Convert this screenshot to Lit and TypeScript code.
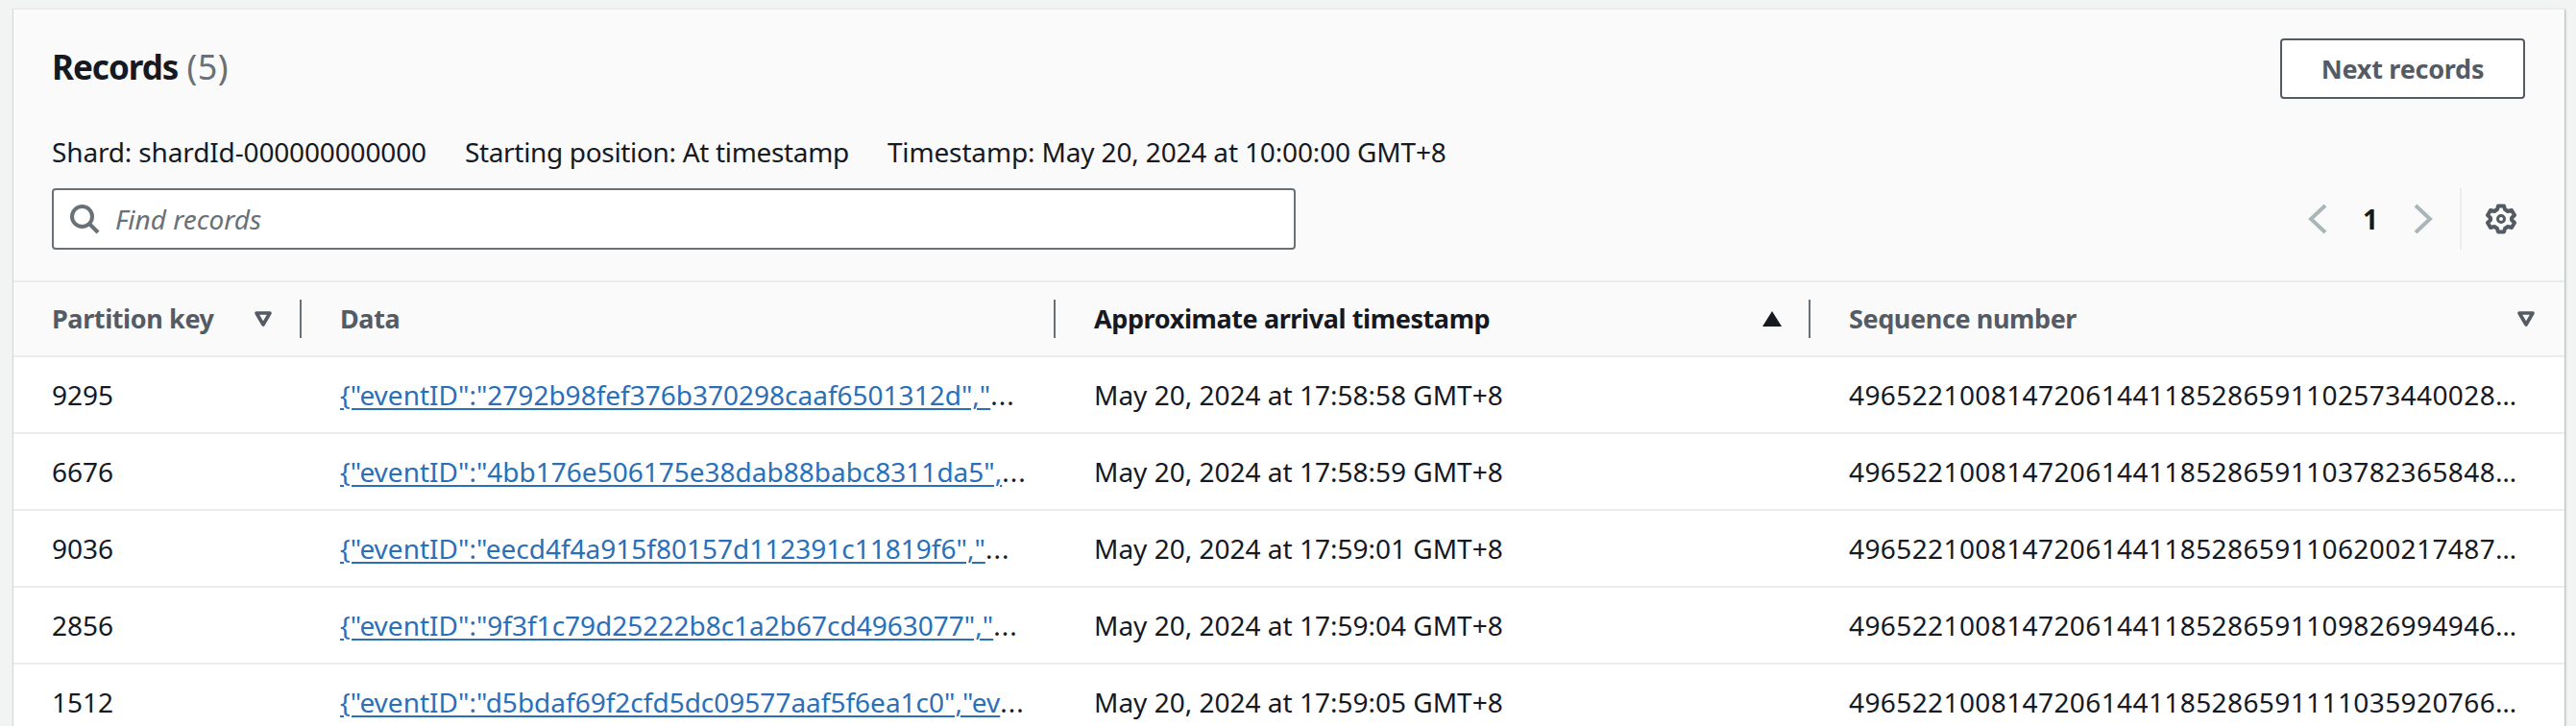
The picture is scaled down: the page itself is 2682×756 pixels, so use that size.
import { LitElement, html, css, svg } from "lit";
import { customElement } from "lit/decorators.js";

const rows = [
  ["9295", '{"eventID":"2792b98fef376b370298caaf6501312d","', "May 20, 2024 at 17:58:58 GMT+8", "49652210081472061441185286591102573440028123456"],
  ["6676", '{"eventID":"4bb176e506175e38dab88babc8311da5",', "May 20, 2024 at 17:58:59 GMT+8", "49652210081472061441185286591103782365848123456"],
  ["9036", '{"eventID":"eecd4f4a915f80157d112391c11819f6","', "May 20, 2024 at 17:59:01 GMT+8", "49652210081472061441185286591106200217487123456"],
  ["2856", '{"eventID":"9f3f1c79d25222b8c1a2b67cd4963077","', "May 20, 2024 at 17:59:04 GMT+8", "49652210081472061441185286591109826994946123456"],
  ["1512", '{"eventID":"d5bdaf69f2cfd5dc09577aaf5f6ea1c0","ev', "May 20, 2024 at 17:59:05 GMT+8", "49652210081472061441185286591111035920766123456"],
];

const sortDown = svg`<path d="M3 4h14L10 16z" fill="none" stroke="currentColor" stroke-width="3.6" stroke-linejoin="round"/>`;

@customElement("app-root")
export class AppRoot extends LitElement {
  static styles = css`
    :host { display: block; height: 756px; overflow: hidden; background: #f2f3f3; color: #16191f;
      font-family: "Noto Sans", sans-serif; font-size: 28px; line-height: 36px; }
    .panel { margin: 9px 12px 0 14px; background: #fff; box-shadow: 1px 1px 2px rgba(0,28,36,.3), -1px 0 1px rgba(0,28,36,.1); border-top: 1px solid #eaeded; }
    .head { background: #fafafa; padding: 30px 41px 32px 40px; border-bottom: 2px solid #eaeded; }
    .top { display: flex; justify-content: space-between; align-items: center; }
    h2 { margin: 0 0 3px; font-size: 35px; line-height: 48px; font-weight: 700; letter-spacing: -1px; }
    h2 span { font-weight: 400; font-size: 36px; letter-spacing: 0.4px; margin-left: 1px; color: #687078; }
    .btn { width: 255px; height: 63px; box-sizing: border-box; display: flex; align-items: center; justify-content: center;
      border: 2px solid #545b64; border-radius: 4px; background: #fff; color: #545b64; font-weight: 700; font-size: 27px; letter-spacing: -0.25px; }
    .meta { display: flex; gap: 40px; margin-top: 37px; letter-spacing: -0.15px; }
    .meta .tight { letter-spacing: -0.33px; }
    .tools { display: flex; justify-content: space-between; align-items: center; margin-top: 20px; height: 64px; }
    .search { width: 1295px; height: 64px; box-sizing: border-box; border: 2px solid #687078; border-radius: 4px; background: #fff;
      display: flex; align-items: center; gap: 16px; padding-left: 16px; color: #687078; font-style: italic; }
    .search svg { width: 32px; height: 32px; color: #687078; }
    .pager { display: flex; align-items: center; height: 64px; color: #aab7b8; }
    .num { width: 86px; text-align: center; color: #16191f; font-weight: 700; }
    .chev { width: 24px; height: 32px; }
    .sep { width: 2px; height: 64px; background: #eaeded; margin: 0 25px 0 26px; }
    .gear { width: 32px; height: 32px; color: #545b64; margin-right: 9px; }
    .grid { display: grid; grid-template-columns: 300px 785px 786px 1fr; }
    .th { position: relative; height: 78px; box-sizing: border-box; background: #fafafa; border-bottom: 2px solid #eaeded; padding: 0 30px 1px 40px;
      display: flex; align-items: center; justify-content: space-between; font-weight: 700; font-size: 27px; letter-spacing: -0.4px; color: #545b64; }
    .th.on { color: #16191f; }
    .th svg { width: 20px; height: 20px; flex: none; }
    .th.div::after { content: ""; position: absolute; right: 0; top: 18px; height: 40px; width: 2px; background: #687078; }
    .td { height: 80px; box-sizing: border-box; border-bottom: 2px solid #eaeded; padding: 0 40px; line-height: 78px;
      white-space: nowrap; overflow: hidden; text-overflow: ellipsis; }
    .td.data { padding-right: 0; }
    .td.seq { letter-spacing: 0.4px; }
    .td a { color: #2a6fb8; text-decoration: underline; text-decoration-thickness: 2px; text-underline-offset: 3px; }
    .dots { letter-spacing: 1px; }
  `;

  render() {
    return html`<div class="panel">
      <div class="head">
        <div class="top">
          <h2>Records <span>(5)</span></h2>
          <div class="btn">Next records</div>
        </div>
        <div class="meta">
          <span>Shard: shardId-000000000000</span>
          <span class="tight">Starting position: At timestamp</span>
          <span>Timestamp: May 20, 2024 at 10:00:00 GMT+8</span>
        </div>
        <div class="tools">
          <div class="search">
            <svg viewBox="0 0 32 32" fill="none" stroke="currentColor" stroke-width="4"><circle cx="13.5" cy="13.5" r="10.5"/><path d="M21 21l9 9"/></svg>
            <span>Find records</span>
          </div>
          <div class="pager">
            <svg class="chev" viewBox="0 0 24 32" fill="none" stroke="currentColor" stroke-width="4"><path d="M20 2L5 16l15 14"/></svg>
            <span class="num">1</span>
            <svg class="chev" viewBox="0 0 24 32" fill="none" stroke="currentColor" stroke-width="4"><path d="M4 2l15 14L4 30"/></svg>
            <span class="sep"></span>
            <svg class="gear" viewBox="0 0 32 32" fill="none" stroke="currentColor" stroke-width="4" stroke-linejoin="round">
              <circle cx="16" cy="16" r="3.5" stroke-width="3"/>
              <path d="M13 2.5h6l1 3.5 3 2 4-1 3 5-3 3v2l3 3-3 5-4-1-3 2-1 3.5h-6l-1-3.5-3-2-4 1-3-5 3-3v-2L2 12l3-5 4 1 3-2z"/>
            </svg>
          </div>
        </div>
      </div>
      <div class="grid">
        <div class="th div"><span>Partition key</span><svg viewBox="0 0 20 20">${sortDown}</svg></div>
        <div class="th div"><span>Data</span></div>
        <div class="th div on"><span>Approximate arrival timestamp</span><svg viewBox="0 0 20 20"><path d="M10 2L20 18H0z" fill="currentColor"/></svg></div>
        <div class="th"><span>Sequence number</span><svg viewBox="0 0 20 20">${sortDown}</svg></div>
        ${rows.map(
          (r) => html`<div class="td">${r[0]}</div>
            <div class="td data"><a>${r[1]}</a><span class="dots">...</span></div>
            <div class="td">${r[2]}</div>
            <div class="td seq">${r[3]}</div>`
        )}
      </div>
    </div>`;
  }
}
